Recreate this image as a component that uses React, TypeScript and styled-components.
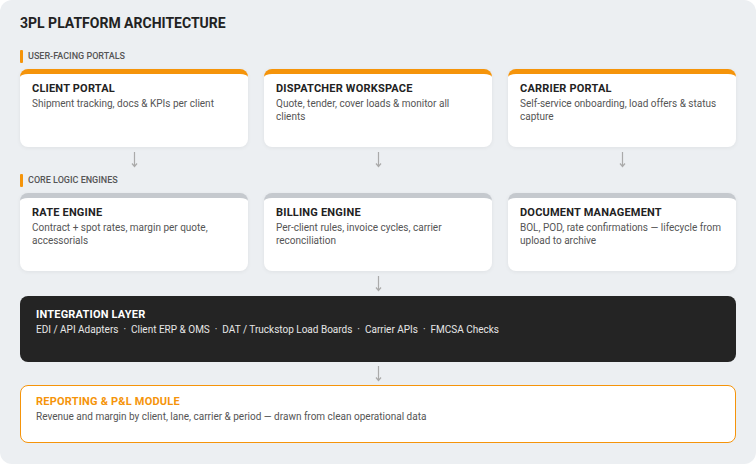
import React from "react";
import styled, { createGlobalStyle } from "styled-components";

const G = createGlobalStyle`
  html,body{margin:0;background:#fff;font-family:Roboto,"Liberation Sans",sans-serif;}
`;
const Panel = styled.div`
  width:756px;height:464px;box-sizing:border-box;background:#eceff2;border-radius:12px;
  padding:14px 20px 0;display:flex;flex-direction:column;
`;
const Title = styled.h1`margin:0 0 17px;font-size:14px;font-weight:700;color:#222;line-height:18px;`;
const Label = styled.div`
  display:flex;align-items:center;gap:5px;font-size:9px;font-weight:500;color:#555;height:14px;
  &::before{content:"";width:3px;height:13px;background:#f5940a;border-radius:1px;}
`;
const Row = styled.div`display:grid;grid-template-columns:repeat(3,228px);gap:16px;margin-top:6px;`;
const Card = styled.div<{ $top: string }>`
  height:78px;box-sizing:border-box;background:#fff;border-radius:8px;border-top:5px solid ${p => p.$top};
  padding:8px 12px;box-shadow:0 1px 4px rgba(0,0,0,0.06);
`;
const CT = styled.div<{ $c?: string }>`font-size:11px;letter-spacing:0.2px;font-weight:700;color:${p => p.$c || "#222"};line-height:14px;margin-bottom:2px;`;
const CD = styled.div<{ $c?: string }>`font-size:10px;color:${p => p.$c || "#555"};line-height:12.5px;`;
const Arrows = styled.div<{ $h: number }>`
  display:grid;grid-template-columns:repeat(3,228px);gap:16px;height:${p => p.$h}px;align-items:center;
`;
const ArrowCell = styled.div`display:flex;justify-content:center;`;
const Arrow = () => (
  <ArrowCell>
    <svg width="7" height="16" viewBox="0 0 7 16"><path d="M3.5 0v14M1 11.5l2.5 3 2.5-3" stroke="#aaa" strokeWidth="1.2" fill="none" /></svg>
  </ArrowCell>
);
const Dark = styled.div`
  height:66px;box-sizing:border-box;background:#242424;border-radius:8px;padding:12px 16px;
`;
const Report = styled.div`
  height:58px;box-sizing:border-box;background:#fff;border:1.5px solid #f5940a;border-radius:8px;padding:9px 15px;
`;

export default function App() {
  return (
    <>
      <G />
      <Panel>
        <Title>3PL PLATFORM ARCHITECTURE</Title>
        <Label>USER-FACING PORTALS</Label>
        <Row>
          <Card $top="#f5940a"><CT>CLIENT PORTAL</CT><CD>Shipment tracking, docs &amp; KPIs per client</CD></Card>
          <Card $top="#f5940a"><CT>DISPATCHER WORKSPACE</CT><CD>Quote, tender, cover loads &amp; monitor all clients</CD></Card>
          <Card $top="#f5940a"><CT>CARRIER PORTAL</CT><CD>Self-service onboarding, load offers &amp; status capture</CD></Card>
        </Row>
        <Arrows $h={26}><Arrow /><Arrow /><Arrow /></Arrows>
        <Label>CORE LOGIC ENGINES</Label>
        <Row>
          <Card $top="#c5c9ce"><CT>RATE ENGINE</CT><CD>Contract + spot rates, margin per quote, accessorials</CD></Card>
          <Card $top="#c5c9ce"><CT>BILLING ENGINE</CT><CD>Per-client rules, invoice cycles, carrier reconciliation</CD></Card>
          <Card $top="#c5c9ce"><CT>DOCUMENT MANAGEMENT</CT><CD>BOL, POD, rate confirmations — lifecycle from upload to archive</CD></Card>
        </Row>
        <Arrows $h={25}><span /><Arrow /><span /></Arrows>
        <Dark>
          <CT $c="#fff">INTEGRATION LAYER</CT>
          <CD $c="#e6e6e6">EDI / API Adapters &nbsp;·&nbsp; Client ERP &amp; OMS &nbsp;·&nbsp; DAT / Truckstop Load Boards &nbsp;·&nbsp; Carrier APIs &nbsp;·&nbsp; FMCSA Checks</CD>
        </Dark>
        <Arrows $h={23}><span /><Arrow /><span /></Arrows>
        <Report>
          <CT $c="#f5940a">REPORTING &amp; P&amp;L MODULE</CT>
          <CD>Revenue and margin by client, lane, carrier &amp; period — drawn from clean operational data</CD>
        </Report>
      </Panel>
    </>
  );
}
